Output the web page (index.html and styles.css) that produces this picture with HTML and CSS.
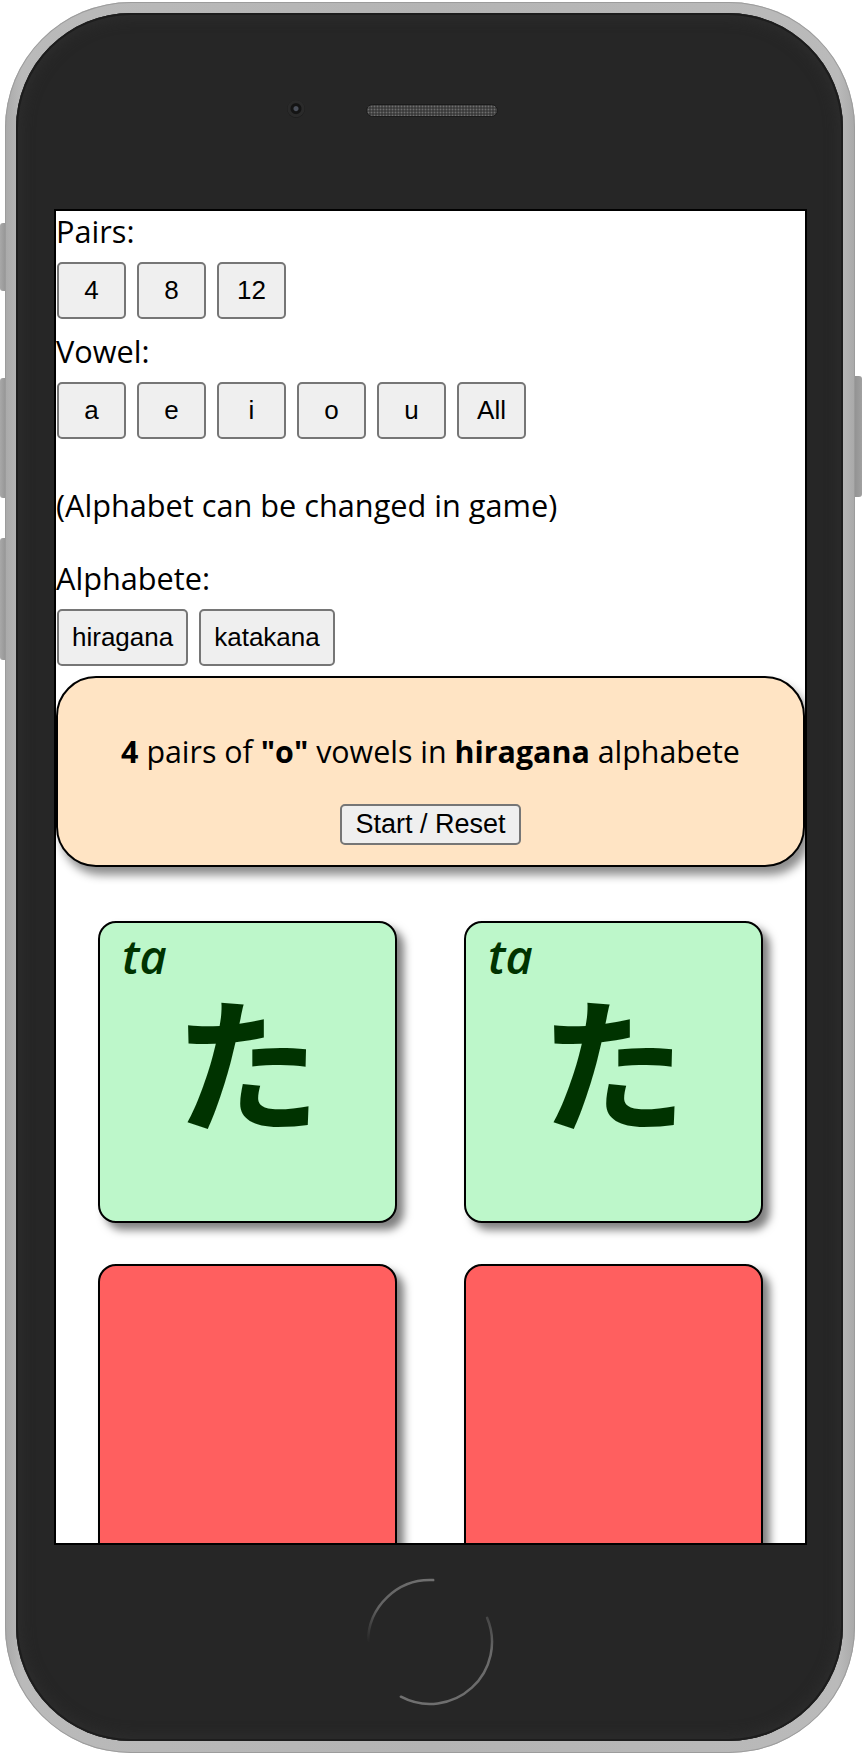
FILE: index.html
```
<!DOCTYPE html>
<html lang="en">
<head>
<meta charset="utf-8">
<title>Kana memory</title>
<link rel="stylesheet" href="styles.css">
</head>
<body>
<div class="device">
  <span class="side-btn side-mute"></span>
  <span class="side-btn side-vol-up"></span>
  <span class="side-btn side-vol-down"></span>
  <span class="side-btn side-power"></span>
  <div class="rim">
    <div class="shell">
      <div class="earpiece">
        <span class="camera"></span>
        <span class="speaker"></span>
      </div>
      <div class="screen">
        <div class="label">Pairs:</div>
        <div class="btn-row">
          <button class="btn opt">4</button>
          <button class="btn opt">8</button>
          <button class="btn opt">12</button>
        </div>
        <div class="label">Vowel:</div>
        <div class="btn-row">
          <button class="btn opt">a</button>
          <button class="btn opt">e</button>
          <button class="btn opt">i</button>
          <button class="btn opt">o</button>
          <button class="btn opt">u</button>
          <button class="btn opt">All</button>
        </div>
        <p class="note">(Alphabet can be changed in game)</p>
        <div class="label">Alphabete:</div>
        <div class="btn-row last">
          <button class="btn alpha">hiragana</button>
          <button class="btn alpha">katakana</button>
        </div>
        <div class="panel">
          <p class="summary"><b>4</b> pairs of <b>"o"</b> vowels in <b>hiragana</b> alphabete</p>
          <button class="btn start">Start / Reset</button>
        </div>
        <div class="cards">
          <div class="card found">
            <div class="romaji">ta</div>
            <div class="kana">た</div>
          </div>
          <div class="card found">
            <div class="romaji">ta</div>
            <div class="kana">た</div>
          </div>
          <div class="card hidden"></div>
          <div class="card hidden"></div>
        </div>
      </div>
      <div class="home">
        <svg width="130" height="130" viewBox="0 0 130 130">
          <defs>
            <linearGradient id="ringA" x1="0" y1="1" x2="1" y2="0">
              <stop offset="0" stop-color="#6a6a6a" stop-opacity="0"/>
              <stop offset="0.35" stop-color="#6a6a6a" stop-opacity="0.9"/>
              <stop offset="1" stop-color="#707070"/>
            </linearGradient>
            <linearGradient id="ringB" x1="0" y1="1" x2="1" y2="0">
              <stop offset="0" stop-color="#707070"/>
              <stop offset="0.8" stop-color="#6a6a6a"/>
              <stop offset="1" stop-color="#6a6a6a" stop-opacity="0.4"/>
            </linearGradient>
          </defs>
          <path d="M3 65 A62 62 0 0 1 68.2 3.1" fill="none" stroke="url(#ringA)" stroke-width="2.5" stroke-linecap="round"/>
          <path d="M122.1 40.8 A62 62 0 0 1 35.9 119.7" fill="none" stroke="url(#ringB)" stroke-width="2.5" stroke-linecap="round"/>
        </svg>
      </div>
    </div>
  </div>
</div>
</body>
</html>
```
FILE: styles.css
```
* { box-sizing: border-box; }
html, body { margin: 0; padding: 0; background: #fff; }

.device {
  position: relative;
  width: 862px;
  height: 1754px;
  overflow: hidden;
}

/* side hardware buttons sit beside / under the rim */
.side-btn {
  position: absolute;
  background: linear-gradient(90deg, #a8a8a8, #8e8e8e);
  border-radius: 3px;
}
.side-mute { left: 0; top: 223px; width: 8px; height: 68px; }
.side-vol-up { left: 0; top: 378px; width: 8px; height: 120px; }
.side-vol-down { left: 0; top: 538px; width: 8px; height: 122px; }
.side-power { left: 852px; top: 376px; width: 10px; height: 121px; background: linear-gradient(90deg, #8e8e8e, #a0a0a0); }

.rim {
  position: relative;
  margin: 2px 0 0 5px;
  width: 850px;
  height: 1751px;
  padding: 11px 12px 12px 11px;
  border-radius: 126px;
  background: linear-gradient(90deg, #a9a9a9 0%, #bababa 2%, #b4b4b4 50%, #bababa 98%, #a9a9a9 100%);
  box-shadow: inset 0 0 0 1px #9c9c9c;
}

.shell {
  width: 100%;
  height: 100%;
  border-radius: 115px;
  background: #262626;
  box-shadow: inset 0 0 0 2px #1d1d1d, inset 0 0 14px 4px #2e2e2e;
  display: flex;
  flex-direction: column;
  align-items: flex-start;
}

.earpiece {
  height: 196px;
  width: 100%;
  display: flex;
  align-items: flex-start;
  padding: 87px 0 0 271px;
}
.camera {
  width: 18px;
  height: 18px;
  border-radius: 50%;
  background: radial-gradient(circle at 50% 48%, #4a4f5a 0 2px, #141414 3px 5px, #2a2a2a 6px 8px, #1c1c1c 9px);
}
.speaker {
  margin: 4px 0 0 61px;
  width: 132px;
  height: 13px;
  border-radius: 7px;
  border: 1px solid #1b1b1b;
  background-color: #3c3c3c;
  background-image: radial-gradient(circle, #6e6e6e 0.8px, transparent 1.1px);
  background-size: 3px 3px;
}

.screen {
  margin-left: 38px;
  width: 753px;
  height: 1336px;
  border: 2px solid #000;
  background: #fff;
  overflow: hidden;
  font-family: "Open Sans", "Noto Sans", sans-serif;
  color: #000;
}

.label {
  font-size: 30.7px;
  line-height: 41px;
  height: 41px;
}

.btn-row {
  display: flex;
  gap: 11px;
  padding: 10px 0 12px 1px;
}
.btn-row.last { padding-bottom: 10px; }

.btn {
  font-family: "Liberation Sans", Arial, sans-serif;
  font-size: 26px;
  color: #000;
  background: #efefef;
  border: 2px solid #767676;
  border-radius: 5px;
  padding: 0 13px;
  height: 57px;
  margin: 0;
}
.opt { width: 69px; padding: 0; }

.note {
  margin: 34px 0 32px;
  font-size: 30.7px;
  line-height: 41px;
}

.panel {
  height: 191px;
  border: 2px solid #000;
  border-radius: 40px;
  background: #ffe4c4;
  box-shadow: 5px 8px 10px rgba(0, 0, 0, 0.45);
  padding-top: 54px;
  display: flex;
  flex-direction: column;
  align-items: center;
}
.summary {
  margin: 0;
  font-size: 30.4px;
  line-height: 40px;
}
.summary b { font-weight: 700; }
.start {
  margin-top: 32px;
  height: 41px;
  font-size: 27px;
  padding: 0 13px;
}

.cards {
  display: grid;
  grid-template-columns: 299px 299px;
  column-gap: 67px;
  row-gap: 41px;
  padding-left: 42px;
  margin-top: 54px;
}
.card {
  height: 302px;
  border: 2px solid #000;
  border-radius: 18px;
  box-shadow: 7px 7px 9px rgba(0, 0, 0, 0.5);
}
.card.found {
  background: #bdf7ca;
  color: #003300;
  padding: 10px 0 0 22px;
}
.card.hidden { background: #ff5f5f; }

.romaji {
  font-family: "Open Sans", "Noto Sans", sans-serif;
  font-style: italic;
  font-weight: 600;
  font-size: 47px;
  line-height: 47px;
}
.kana {
  margin-left: -22px;
  margin-top: 5px;
  text-align: center;
  font-family: "Noto Sans CJK JP", "Noto Sans CJK SC", sans-serif;
  font-weight: 700;
  font-size: 146px;
  line-height: 146px;
}

.home {
  margin: 32px 0 0 349px;
  width: 130px;
  height: 130px;
}
.home svg { display: block; }
```
